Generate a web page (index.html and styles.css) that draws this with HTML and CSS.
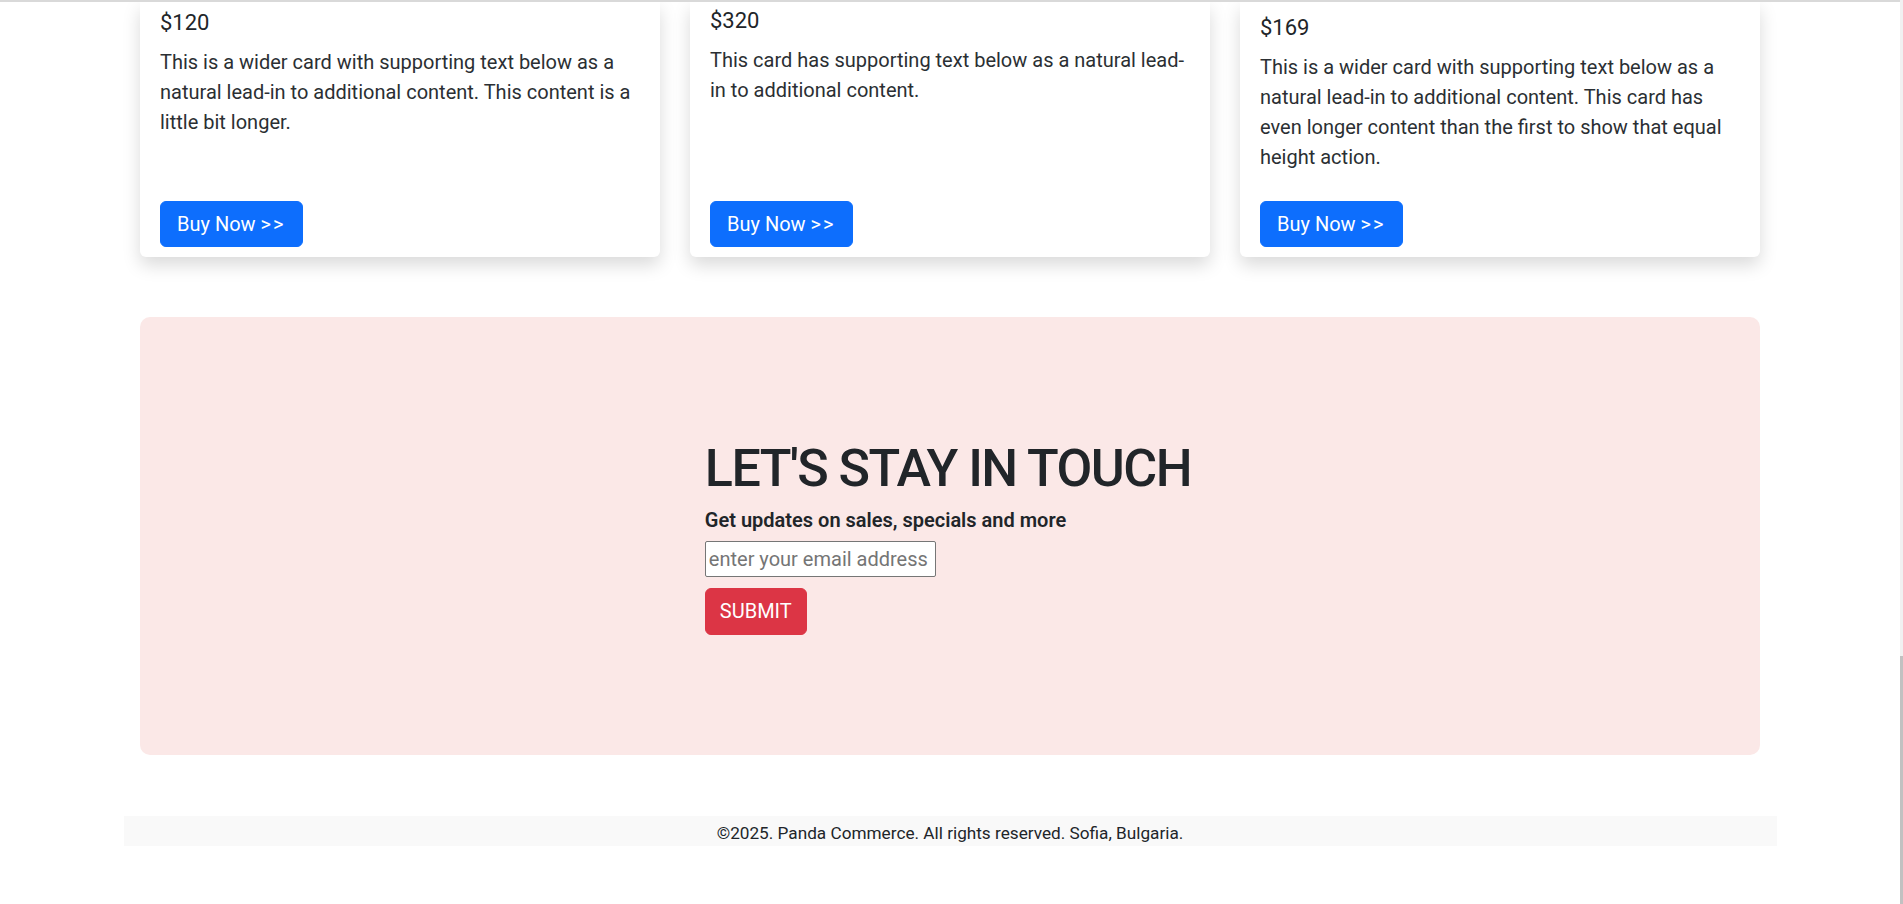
FILE: index.html
```html
<!DOCTYPE html>
<html lang="en">
<head>
<meta charset="utf-8">
<title>Panda Commerce</title>
<link rel="stylesheet" href="styles.css">
</head>
<body>
<div class="page">
  <div class="topline"></div>

  <section class="cards">
    <article class="card card--one">
      <h5 class="card-price">$120</h5>
      <p class="card-text">This is a wider card with supporting text below as a natural lead-in to additional content. This content is a little bit longer.</p>
      <a class="btn btn-primary" href="#">Buy Now <span class="arrows">&gt;&gt;</span></a>
    </article>
    <article class="card card--two">
      <h5 class="card-price">$320</h5>
      <p class="card-text">This card has supporting text below as a natural lead-in to additional content.</p>
      <a class="btn btn-primary" href="#">Buy Now <span class="arrows">&gt;&gt;</span></a>
    </article>
    <article class="card card--three">
      <h5 class="card-price">$169</h5>
      <p class="card-text">This is a wider card with supporting text below as a natural lead-in to additional content. This card has even longer content than the first to show that equal height action.</p>
      <a class="btn btn-primary" href="#">Buy Now <span class="arrows">&gt;&gt;</span></a>
    </article>
  </section>

  <section class="newsletter">
    <div class="newsletter-inner">
      <h2 class="newsletter-title">LET'S STAY IN TOUCH</h2>
      <p class="newsletter-sub">Get updates on sales, specials and more</p>
      <form class="newsletter-form">
        <input class="email-input" type="email" placeholder="enter your email address">
        <button class="btn btn-danger" type="button">SUBMIT</button>
      </form>
    </div>
  </section>

  <footer class="footer">©2025. Panda Commerce. All rights reserved. Sofia, Bulgaria.</footer>

  <div class="scroll-track"><div class="scroll-thumb"></div></div>
</div>
</body>
</html>
```
FILE: styles.css
```css
html, body {
  margin: 0;
  padding: 0;
  background: #ffffff;
}

body {
  font-family: Roboto, "Liberation Sans", Arial, sans-serif;
  font-size: 20px;
  line-height: 1.5;
  color: #212529;
}

.page {
  width: 1900px;
  height: 904px;
  overflow: hidden;
}

.topline {
  height: 2px;
  background: #d9d9d9;
  position: relative;
  z-index: 2;
}

/* Cards */
.cards {
  width: 1620px;
  margin: 0 auto;
  display: grid;
  grid-template-columns: repeat(3, 520px);
  column-gap: 30px;
  align-items: stretch;
}

.card {
  background: #ffffff;
  border-radius: 0 0 6px 6px;
  box-shadow: 0 8px 18px rgba(0, 0, 0, 0.15);
  display: flex;
  flex-direction: column;
  padding: 8px 20px 10px 20px;
}

.card--one { padding-top: 8px; }
.card--two { padding-top: 6px; }
.card--three { padding-top: 13px; }

.card-price {
  margin: 0 0 11px 0;
  font-size: 22px;
  font-weight: 400;
  line-height: 1.2;
  color: #212529;
}

.card-text {
  margin: 0 0 29px 0;
  font-size: 20px;
  line-height: 30px;
  color: #2b2f33;
}

.btn {
  display: inline-block;
  white-space: nowrap;
  font-family: inherit;
  font-size: 20px;
  line-height: 30px;
  font-weight: 400;
  color: #ffffff;
  text-decoration: none;
  border: 1px solid transparent;
  border-radius: 6px;
  cursor: pointer;
}

.arrows {
  letter-spacing: 2px;
}

.btn-primary {
  background: #0d6efd;
  border-color: #0d6efd;
  padding: 7px 16px;
  margin-top: auto;
  align-self: flex-start;
}

.btn-danger {
  background: #dc3545;
  border-color: #dc3545;
  padding: 7.5px 14px;
}

/* Newsletter */
.newsletter {
  width: 1620px;
  margin: 60px auto 0 auto;
  background: #fbe8e7;
  border-radius: 10px;
  padding: 121px 0 120px 0;
  display: flex;
  justify-content: center;
}

.newsletter-inner {
  display: flex;
  flex-direction: column;
  align-items: flex-start;
  margin-left: -4px;
}

.newsletter-title {
  margin: 0 0 4px 0;
  font-size: 52px;
  font-weight: 500;
  letter-spacing: -1.5px;
  line-height: 1.2;
  color: #212529;
}

.newsletter-sub {
  margin: 0 0 6px 0;
  font-size: 20px;
  font-weight: 600;
  line-height: 30px;
}

.newsletter-form {
  display: flex;
  flex-direction: column;
  align-items: flex-start;
  gap: 11px;
  margin: 0;
}

.email-input {
  box-sizing: border-box;
  width: 231px;
  height: 36px;
  padding: 0 3px;
  font-family: inherit;
  font-size: 20px;
  color: #212529;
  background: #ffffff;
  border: 1px solid #767676;
  border-radius: 2px;
}

.email-input::placeholder {
  color: #757575;
}

/* Footer */
.footer {
  box-sizing: border-box;
  width: 1653px;
  height: 30px;
  margin: 61px auto 0 auto;
  padding-top: 4px;
  background: #f9f9f9;
  text-align: center;
  font-size: 17.2px;
  line-height: 26px;
  color: #212529;
}

/* browser scrollbar sliver at the right edge */
.scroll-track {
  position: fixed;
  top: 0;
  right: 0;
  width: 3px;
  height: 904px;
  background: #f1f1f1;
}

.scroll-thumb {
  margin-top: 656px;
  height: 248px;
  background: #c1c1c1;
}
```
